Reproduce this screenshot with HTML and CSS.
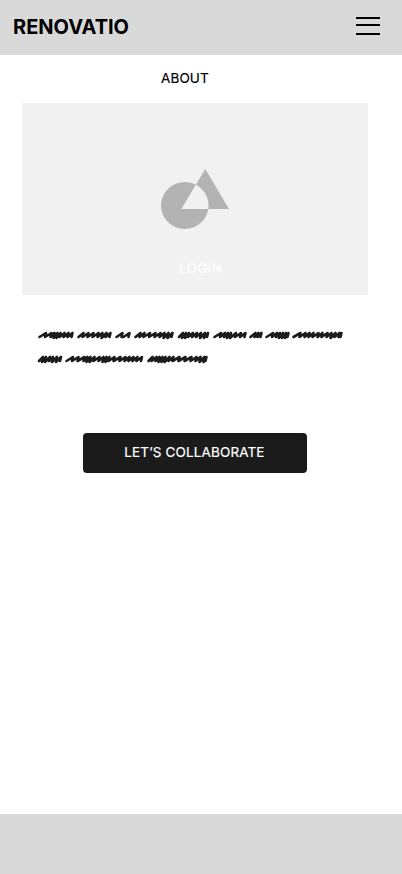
FILE: index.html
```html
<!DOCTYPE html>
<html lang="en">
<head>
<meta charset="utf-8">
<meta name="viewport" content="width=device-width, initial-scale=1">
<title>Renovatio</title>
<link rel="stylesheet" href="styles.css">
</head>
<body>
<header class="header">
  <div class="brand">RENOVATIO</div>
  <button class="menu" aria-label="Menu"><span></span><span></span><span></span></button>
</header>
<main class="main">
  <h1 class="title">ABOUT</h1>
  <section class="hero">
    <svg class="shapes" width="70" height="62" viewBox="0 0 70 62"><path fill="#b3b3b3" fill-rule="evenodd" d="M1 37.5a23.8 23.5 0 1 0 47.6 0a23.8 23.5 0 1 0-47.6 0ZM45.3 1L69 41H21.3Z"/></svg>
    <span class="login">LOGIN</span>
  </section>
  <svg class="copy" width="312" height="40" viewBox="36.500 326 312 40">
    <g fill="none" stroke="#1b1b1b" stroke-width="2.6" stroke-linecap="round" stroke-linejoin="round">
      <path d="M40 337l6.5-4-1 4 6.5-4-1 4 4-4-1 5 4-5-1 5 4-5-1 4 5-4-1 4 5-4-1 4 5-4-1 4"/>
      <path d="M79 337l5-4-1 4 6-4-1 4 6-4-1 4 6-4-1 4 5-4-1 5 5-5-1 4 5-4-1 4"/>
      <path d="M117 337l6-4-1 4h2l6-4-1 4"/>
      <path d="M136 337l5-4-1 4 5-4-1 4 6.5-4-1 4 6.5-4-1 4 6-4-1 4 5-4-1 5 5-5-1 5 5-5-1 4"/>
      <path d="M179.500 337l4-4-1 5 4-5-1 5 4-5-1 4 5-4-1 4 5-4-1 4 5-4-1 5 5-5-1 5 4-5-1 4"/>
      <path d="M215 337l6.500-4-1 4 5-4-1 4 4-4-1 5 4-5-1 5 6-5-1 4 6-4-1 4 5.500-4-1 4"/>
      <path d="M251 337l5-4-1 4 4-4-1 4 4-4-1 4"/>
      <path d="M267 337l6.500-4-1 4 5-4-1 4 4-4-1 5 4-5-1 5 4-5-1 5 3.500-5-1 4"/>
      <path d="M294 337l7-4-1 4 6-4-1 4 5-4-1 4 5-4-1 4 6-4-1 4 5-4-1 4 6-4-1 4 5-4-1 5 5-5-1 4 5-4-1 4 3-4-1 4"/>
      <path d="M39.500 361l4-4-1 5 4-5-1 5 5-5-1 4 4-4-1 5 5-5-1 5 5-5-1 4"/>
      <path d="M67 361l6.500-4-1 4 6.500-4-1 4 7-4-1 4 4-4-1 5 4-5-1 5 5-5-1 4 6-4-1 4 5-4-1 5 4-5-1 5 4-5-1 4 6-4-1 4 7-4-1 4 6-4-1 4 5-4-1 4 5-4-1 4 5-4-1 4 5.500-4-1 4"/>
      <path d="M149 361l4-4-1 4 5-4-1 4 4-4-1 5 4-5-1 5 4-5-1 5 5-5-1 4 5-4-1 4 7-4-1 4 7-4-1 4 7-4-1 4 6-4-1 4 5-4-1 5 5-5-1 5 3-5-1 4"/>
    </g>
  </svg>
  <button class="cta">LET’S COLLABORATE</button>
</main>
<footer class="footer"></footer>
</body>
</html>
```
FILE: styles.css
```css
* { box-sizing: border-box; }
body { margin: 0; min-height: 874px; display: flex; flex-direction: column; background: #fff; color: #000; font-family: Inter, sans-serif; }
button { border: 0; padding: 0; font-family: inherit; }
.header { height: 55px; display: flex; justify-content: space-between; align-items: flex-start; padding: 14px 22px 0 13px; background: #d9d9d9; }
.brand { font-size: 20px; line-height: 26px; font-weight: 700; }
.menu { display: grid; width: 24px; margin-top: 3px; background: none; }
.menu span { height: 2px; background: #000; }
.menu span:nth-child(2) { margin-top: 5px; }
.menu span:nth-child(3) { margin-top: 7px; }
.main { flex: 1; display: flex; flex-direction: column; }
.title, .login, .cta { font-size: 13.5px; line-height: 20px; font-weight: 400; letter-spacing: .13px; -webkit-text-stroke: .2px currentColor; }
.title { margin: 13px 0 15px 161px; }
.hero { width: 346px; height: 192px; margin-left: 22px; padding-top: 65px; display: flex; flex-direction: column; align-items: flex-start; background: #f1f1f1; }
.shapes { margin-left: 138px; }
.login { margin: 28px 0 0 157px; color: #fff; letter-spacing: .3px; }
.copy { margin: 31px 0 0 36px; }
.cta { width: 224px; height: 40px; margin: 67px 0 0 83px; padding: 0 1px 2px 0; border-radius: 4px; background: #1b1b1b; color: #fff; }
.footer { height: 60px; background: #d9d9d9; }
```
